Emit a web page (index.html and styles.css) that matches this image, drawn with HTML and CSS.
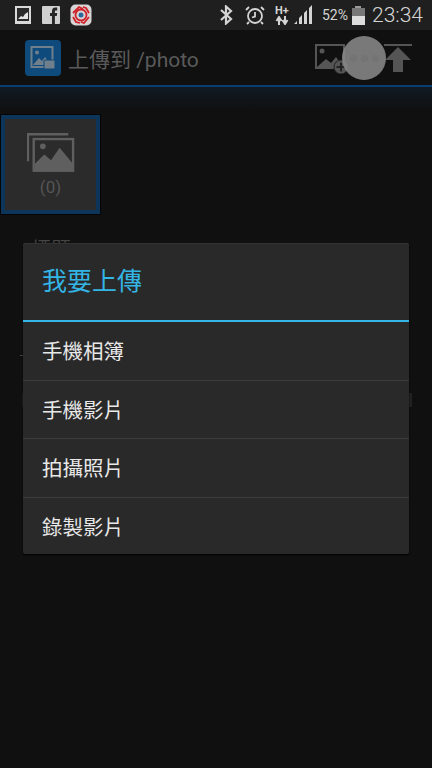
FILE: index.html
```html
<!DOCTYPE html>
<html lang="zh-Hant">
<head>
    <meta charset="UTF-8">
    <meta name="viewport" content="width=device-width, initial-scale=1.0">
    <title>Upload</title>
    <link rel="stylesheet" href="styles.css">
</head>
<body>

<div class="screen">
    <!-- Status bar -->
    <div class="status-bar">
        <div class="status-left">
            <svg width="18" height="20" viewBox="0 0 18 20"><rect x="1" y="1" width="16" height="18" fill="#d8d8d8"/><rect x="3" y="3" width="12" height="13" fill="#2a2a2a"/><path d="M4 14l3-3 2 1 2-3 3-2v7H4z" fill="#e4e4e4"/></svg>
            <svg width="18" height="18" viewBox="0 0 18 18"><rect width="18" height="18" rx="1" fill="#d0d0d0"/><path d="M10 18V10H8V7h2V5c0-2.400 1.400-3.500 3.400-3.500h1.800v3h-1.300c-.8 0-1 .4-1 1.100V7h2.300l-.4 3h-1.900v8z" fill="#262626"/></svg>
            <svg width="22" height="22" viewBox="0 0 22 22"><rect width="21" height="21" x=".5" y=".5" rx="5" fill="#d8d4d4"/><circle cx="11" cy="11" r="5.500" fill="none" stroke="#cf2027" stroke-width="1.800"/><path d="M3 9l6-6 4 2M19 9l-3-5-3-1M3 13l3 5 4 1M19 13l-5 6-3-1" fill="none" stroke="#cf2027" stroke-width="1.800"/><circle cx="11" cy="11" r="2.500" fill="#2a6a9a"/></svg>
        </div>
        <div class="status-right">
            <svg width="13" height="20" viewBox="0 0 13 20"><path d="M1 5l10 9-5 4.500V1.500L11 6 1 15" fill="none" stroke="#d4d4d4" stroke-width="2.200"/></svg>
            <svg class="alarm-icon" width="20" height="20" viewBox="0 0 20 20"><circle cx="10" cy="11" r="7" fill="none" stroke="#d4d4d4" stroke-width="1.800"/><path d="M10 7v4.500l-3 1M1 5l3-3M19 5l-3-3M4 17l-2 2M16 17l2 2" fill="none" stroke="#d4d4d4" stroke-width="1.800"/></svg>
            <div class="network">
                <span>H+</span>
                <svg width="14" height="9" viewBox="0 0 14 9"><path d="M4 9V3M1.500 5L4 1l2.500 4M10 0v6M7.500 4L10 8l2.500-4" fill="none" stroke="#d4d4d4" stroke-width="2"/></svg>
            </div>
            <svg width="20" height="20" viewBox="0 0 20 20"><path d="M1 19l3-3v3zM6 19v-6l3-3v9zM11 19V8l3-3v14zM16 19V3l3-3v19z" fill="#d4d4d4"/></svg>
            <span class="battery-text">52%</span>
            <div class="battery"><div class="battery-cap"></div><div class="battery-body"><div class="battery-fill"></div></div></div>
            <span class="clock">23:34</span>
        </div>
    </div>

    <!-- Action bar -->
    <div class="action-bar">
        <div class="app-icon">
            <svg width="26" height="26" viewBox="0 0 26 26"><rect x="1.500" y="2" width="21" height="20" fill="none" stroke="#6f7f8c" stroke-width="2"/><circle cx="7" cy="7.500" r="2" fill="#6f7f8c"/><path d="M3 20l6-7 3 3 3-4 6 8z" fill="#6f7f8c"/><rect x="14" y="15" width="11" height="9" rx="1" fill="#6f7f8c" stroke="#0f4a7c"/></svg>
        </div>
        <div class="action-title">上傳到 /photo</div>
        <div class="action-icons">
            <svg width="34" height="32" viewBox="0 0 34 32"><rect x="1" y="3" width="28" height="23" fill="none" stroke="#555" stroke-width="2"/><circle cx="7" cy="9" r="2.500" fill="#555"/><path d="M2 25l9-8 5 4 5-6 7 10z" fill="#555"/><circle cx="26" cy="25" r="7" fill="#555" stroke="#222"/><path d="M26 20.500v9M21.500 25h9" stroke="#222" stroke-width="2"/></svg>
            <svg width="30" height="30" viewBox="0 0 30 30"><path d="M1 1h28v2H1zM15 4l13 13h-8v12h-10V17H2z" fill="#555"/></svg>
        </div>
    </div>
    <div class="blue-line"></div>

    <!-- Page behind the dialog -->
    <div class="content">
        <div class="thumb">
            <svg width="48" height="41" viewBox="0 0 50 42"><path d="M1 30V2h42" fill="none" stroke="#5f5f5f" stroke-width="2.500"/><rect x="7" y="7" width="41" height="33" fill="none" stroke="#5f5f5f" stroke-width="2.500"/><circle cx="16.500" cy="14.500" r="3" fill="#5f5f5f"/><path d="M8 40V33l10-10 7 6 9-13 14 17v7z" fill="#5f5f5f"/></svg>
            <span class="thumb-count">(0)</span>
        </div>
        <div class="behind-label">標題</div>
        <div class="behind-field"></div>
        <div class="behind-box"></div>
    </div>

    <!-- Floating menu button -->
    <div class="float-button"><i></i><i></i><i></i></div>

    <!-- Dialog -->
    <div class="dialog">
        <div class="dialog-title">我要上傳</div>
        <div class="dialog-item">手機相簿</div>
        <div class="dialog-item">手機影片</div>
        <div class="dialog-item">拍攝照片</div>
        <div class="dialog-item">錄製影片</div>
    </div>
</div>

</body>
</html>
```

FILE: styles.css
```css
/* General Styles */
html, body {
    margin: 0;
    padding: 0;
}

body {
    width: 432px;
    height: 768px;
    overflow: hidden;
    background-color: #111;
    font-family: "Roboto", "Noto Sans CJK TC", sans-serif;
}

.screen {
    position: relative;
    width: 432px;
    height: 768px;
    overflow: hidden;
}

/* Status bar */
.status-bar {
    height: 30px;
    background-color: #1f1f1f;
    display: flex;
    justify-content: space-between;
    align-items: center;
    padding: 0 9px 0 14px;
    box-sizing: border-box;
}

.status-left {
    display: flex;
    align-items: center;
    gap: 10px;
}

.status-right {
    display: flex;
    align-items: center;
    gap: 4px;
    color: #d4d4d4;
}

.alarm-icon {
    margin: 0 6px 0 8px;
}

.network {
    display: flex;
    flex-direction: column;
    align-items: center;
    width: 14px;
}

.network span {
    font-size: 11px;
    font-weight: bold;
    line-height: 11px;
}

.battery-text {
    font-size: 14px;
    margin-left: 5px;
}

.battery {
    width: 13px;
    display: flex;
    flex-direction: column;
    align-items: center;
}

.battery-cap {
    width: 6px;
    height: 2px;
    background-color: #999;
}

.battery-body {
    width: 13px;
    height: 17px;
    background-color: #777;
    display: flex;
    align-items: flex-end;
}

.battery-fill {
    width: 100%;
    height: 9px;
    background-color: #ddd;
}

.clock {
    font-size: 21px;
    font-weight: 300;
    margin-left: 3px;
}

/* Action bar */
.action-bar {
    height: 55px;
    background-color: #101010;
    display: flex;
    align-items: center;
    padding: 0 19px 0 25px;
    box-sizing: border-box;
}

.app-icon {
    width: 36px;
    height: 36px;
    background-color: #0f4a7c;
    border-radius: 4px;
    display: flex;
    align-items: center;
    justify-content: center;
    margin-right: 7px;
}

.action-title {
    flex: 1;
    color: #5a5a5a;
    font-size: 21px;
}

.action-icons {
    display: flex;
    align-items: center;
    gap: 34px;
}

.blue-line {
    height: 2px;
    background-color: #0b3d70;
}

/* Content behind the dialog */
.content {
    height: 681px;
    padding: 28px 0 0 1px;
    box-sizing: border-box;
    background: linear-gradient(#111a24, #101010 22px);
}

.thumb {
    width: 99px;
    height: 99px;
    box-sizing: border-box;
    background-color: #2b2b2b;
    border: 4px solid #0c3559;
    outline: 1px solid #050505;
    display: flex;
    flex-direction: column;
    align-items: center;
    padding-top: 13px;
}

.thumb-count {
    color: #555;
    font-size: 17px;
    margin-top: 4px;
}

.behind-label {
    color: #444;
    font-size: 20px;
    margin: 20px 0 0 30px;
}

.behind-field {
    height: 1px;
    margin: 92px 40px 0 19px;
    background-color: #444;
}

.behind-box {
    height: 14px;
    margin: 37px 20px 0 21px;
    background-color: #222;
}

/* Floating menu button */
.float-button {
    position: absolute;
    left: 342px;
    top: 36px;
    width: 44px;
    height: 44px;
    border-radius: 50%;
    background-color: rgba(140, 140, 140, 0.85);
    display: flex;
    align-items: center;
    justify-content: center;
    gap: 4px;
}

.float-button i {
    width: 7px;
    height: 7px;
    border-radius: 50%;
    background-color: #747474;
}

/* Dialog */
.dialog {
    position: absolute;
    left: 23px;
    top: 243px;
    width: 386px;
    height: 311px;
    background-color: #292929;
    border-radius: 2px;
    box-shadow: 0 1px 0 #333 inset, 0 1px 2px #000;
}

.dialog-title {
    height: 79px;
    box-sizing: border-box;
    padding: 20px 0 0 19px;
    line-height: 38px;
    color: #33b5e5;
    font-size: 25px;
    border-bottom: 2px solid #33b5e5;
}

.dialog-item {
    height: 58.500px;
    box-sizing: border-box;
    padding-left: 19px;
    line-height: 61px;
    color: #e8e8e8;
    font-size: 20.500px;
    border-bottom: 1px solid #3c3c3c;
}

.dialog-item:last-child {
    border-bottom: none;
}
```
